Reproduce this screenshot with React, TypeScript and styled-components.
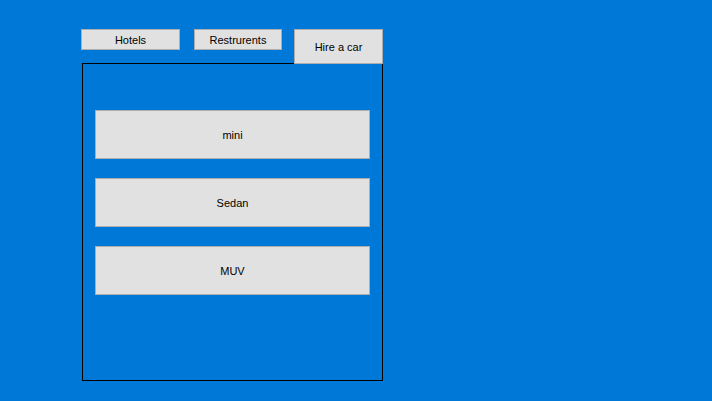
import React from "react";
import styled, { createGlobalStyle } from "styled-components";

const Global = createGlobalStyle`
  html, body { margin: 0; padding: 0; background: #0078d7; }
  body { font-family: "Liberation Sans", Arial, sans-serif; }
`;

const Page = styled.div`
  width: 712px;
  height: 401px;
  background: #0078d7;
  padding: 29px 0 0 81px;
  box-sizing: border-box;
`;

const TabRow = styled.div`
  display: flex;
  align-items: flex-start;
  height: 34px;
  position: relative;
  z-index: 1;
`;

const Tab = styled.button<{ $w: number; $h: number; $ml: number }>`
  box-sizing: border-box;
  width: ${(p) => p.$w}px;
  height: ${(p) => p.$h}px;
  margin-left: ${(p) => p.$ml}px;
  background: #e1e1e1;
  border: 1px solid #adadad;
  padding: 0;
  font-family: "Liberation Sans", Arial, sans-serif;
  font-size: 11px;
  color: #000;
  display: flex;
  align-items: center;
  justify-content: center;
`;

const Panel = styled.div`
  box-sizing: border-box;
  margin-left: 1px;
  width: 301px;
  height: 318px;
  border: 1px solid #000;
  padding: 46px 12px 0 12px;
  display: flex;
  flex-direction: column;
  gap: 19px;
`;

const CarButton = styled.button`
  box-sizing: border-box;
  width: 275px;
  height: 49px;
  background: #e1e1e1;
  border: 1px solid #adadad;
  padding: 0;
  font-family: "Liberation Sans", Arial, sans-serif;
  font-size: 11px;
  color: #000;
  display: flex;
  align-items: center;
  justify-content: center;
`;

export default function App() {
  return (
    <>
      <Global />
      <Page>
        <TabRow>
          <Tab $w={99} $h={21} $ml={0}>Hotels</Tab>
          <Tab $w={88} $h={21} $ml={14}>Restrurents</Tab>
          <Tab $w={89} $h={35} $ml={12}>Hire a car</Tab>
        </TabRow>
        <Panel>
          <CarButton>mini</CarButton>
          <CarButton>Sedan</CarButton>
          <CarButton>MUV</CarButton>
        </Panel>
      </Page>
    </>
  );
}
